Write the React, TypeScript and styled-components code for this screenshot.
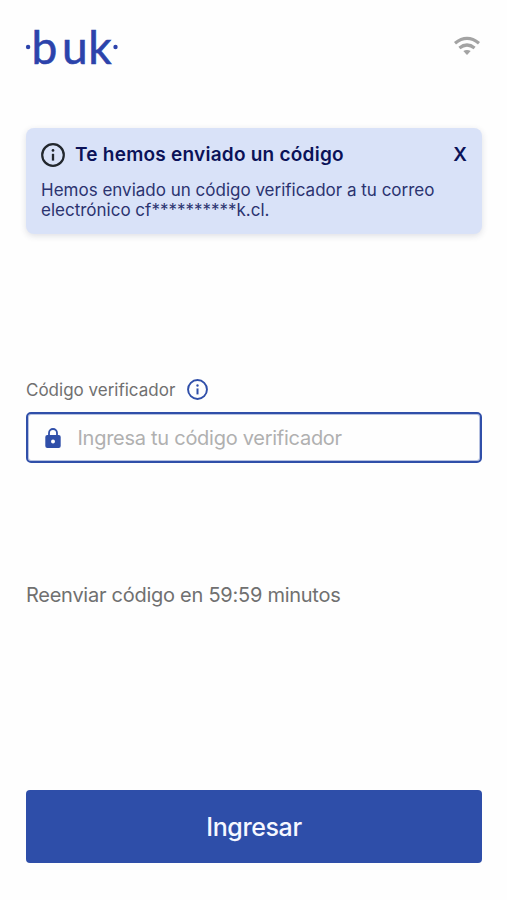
import React from "react";
import styled, { createGlobalStyle } from "styled-components";

const GlobalStyle = createGlobalStyle`
  * { box-sizing: border-box; }
  body { margin: 0; background: #fefefe; font-family: Inter, sans-serif; }
`;

const Screen = styled.main`
  display: flex;
  flex-direction: column;
  width: 507px;
  height: 900px;
  padding: 28px 25px 37px 26px;
  overflow: hidden;
`;

const Header = styled.header`
  display: flex;
  justify-content: space-between;
  height: 40px;
`;

const Logo = styled.svg`
  display: block;
  width: 92px;
  height: 40px;
  overflow: visible;
  fill: #2c43ab;
  font-family: Lato, sans-serif;
  font-size: 46px;

  text {
    stroke: #2c43ab;
    stroke-width: 0.6px;
  }
`;

const Wifi = styled.svg`
  width: 28px;
  height: 20px;
  margin: 8px 1px 0 0;
  fill: none;
  stroke: #a3a3a3;
  stroke-width: 3.2;
`;

const Notice = styled.section`
  height: 106px;
  margin-top: 60px;
  padding: 14px 15px 0;
  border-radius: 8px;
  background: #d9e2f8;
  box-shadow: 0 2px 6px rgba(40, 50, 80, 0.15);
`;

const NoticeHeader = styled.div`
  display: flex;
  align-items: center;
  height: 26px;
`;

const NoticeTitle = styled.h1`
  flex: 1;
  margin: 0 0 0 10px;
  color: #0b1258;
  font-size: 19px;
  font-weight: 600;
  line-height: 26px;
  letter-spacing: 0.24px;
  white-space: nowrap;
`;

const CloseButton = styled.button`
  padding: 0;
  border: 0;
  background: none;
  color: #0b1258;
  font: 600 19px/26px Inter, sans-serif;
`;

const NoticeText = styled.p`
  margin: 12px 0 0;
  color: #2b3370;
  font-size: 17px;
  line-height: 20px;
  white-space: nowrap;
`;

const FieldLabel = styled.label`
  display: flex;
  align-items: center;
  gap: 12px;
  height: 22px;
  margin-top: 144px;
  color: #707070;
  font-size: 17px;
  white-space: nowrap;
`;

const LabelText = styled.span`
  padding-top: 2px;
`;

const InfoIcon = styled.svg<{ $size: number; $color: string }>`
  flex: none;
  width: ${({ $size }) => $size}px;
  height: ${({ $size }) => $size}px;
  color: ${({ $color }) => $color};
`;

const Field = styled.div`
  display: flex;
  align-items: center;
  height: 51px;
  margin-top: 12px;
  padding: 0 15.5px 0 17px;
  border: 2px solid #304fa9;
  border-radius: 5px;
  box-shadow: inset 0 0 0 1px rgba(48, 79, 169, 0.35);
`;

const Lock = styled.svg`
  flex: none;
  width: 16px;
  height: 20px;
`;

const CodeInput = styled.input`
  flex: 1;
  min-width: 0;
  height: 44px;
  margin-left: 16.5px;
  padding: 0;
  border: 0;
  outline: 0;
  background: none;
  font: 400 20px Inter, sans-serif;
  letter-spacing: -0.27px;
  &::placeholder { color: #b0b0b0; opacity: 1; }
`;

const Resend = styled.p`
  margin: 119px 0 0;
  color: #707070;
  font-size: 20px;
  line-height: 26px;
  letter-spacing: -0.26px;
  white-space: nowrap;
`;

const SubmitButton = styled.button`
  height: 73px;
  margin-top: auto;
  border: 0;
  border-radius: 4px;
  background: #2e4ea9;
  color: #f6f8ff;
  font: 500 25px Inter, sans-serif;
  letter-spacing: -0.4px;
`;

function Info({ size, color }: { size: number; color: string }) {
  return (
    <InfoIcon $size={size} $color={color} viewBox="0 0 24 24" aria-hidden="true">
      <circle cx="12" cy="12" r="10.8" fill="none" stroke="currentColor" strokeWidth="2.2" />
      <circle cx="12" cy="7.4" r="1.35" fill="currentColor" />
      <path d="M12 10.8v6.8" stroke="currentColor" strokeWidth="2.3" />
    </InfoIcon>
  );
}

export default function App() {
  return (
    <>
      <GlobalStyle />
      <Screen>
        <Header>
          <Logo viewBox="0 0 92 40" role="img" aria-label="buk">
            <circle cx="2.1" cy="19" r="2.2" />
            <text transform="translate(4.8 36.3)" x="0.6 31.2 57.5" y="0">buk</text>
            <circle cx="89.5" cy="19" r="2.2" />
          </Logo>
          <Wifi viewBox="0 0 28 20" aria-label="WiFi">
            <path d="M2 7.2Q14-2.6 26 7.2M6.4 12Q14 6 21.6 12" />
            <path d="M10.3 15.1Q14 12.7 17.7 15.1L14 19z" fill="#a3a3a3" stroke="none" />
          </Wifi>
        </Header>
        <Notice>
          <NoticeHeader>
            <Info size={24} color="#22272d" />
            <NoticeTitle>Te hemos enviado un código</NoticeTitle>
            <CloseButton>X</CloseButton>
          </NoticeHeader>
          <NoticeText>
            Hemos enviado un código verificador a tu correo
            <br />
            electrónico cf**********k.cl.
          </NoticeText>
        </Notice>
        <FieldLabel htmlFor="code">
          <LabelText>Código verificador</LabelText>
          <Info size={21} color="#304fa9" />
        </FieldLabel>
        <Field>
          <Lock viewBox="0 0 16 20" aria-hidden="true">
            <path d="M4 9V5a4 4 0 0 1 8 0v4" fill="none" stroke="#304fa9" strokeWidth="1.8" />
            <rect x="0.3" y="7" width="15.4" height="13" rx="2" fill="#304fa9" />
            <circle cx="8" cy="13.4" r="2" fill="#fff" />
          </Lock>
          <CodeInput id="code" placeholder="Ingresa tu código verificador" />
        </Field>
        <Resend>Reenviar código en 59:59 minutos</Resend>
        <SubmitButton>Ingresar</SubmitButton>
      </Screen>
    </>
  );
}
